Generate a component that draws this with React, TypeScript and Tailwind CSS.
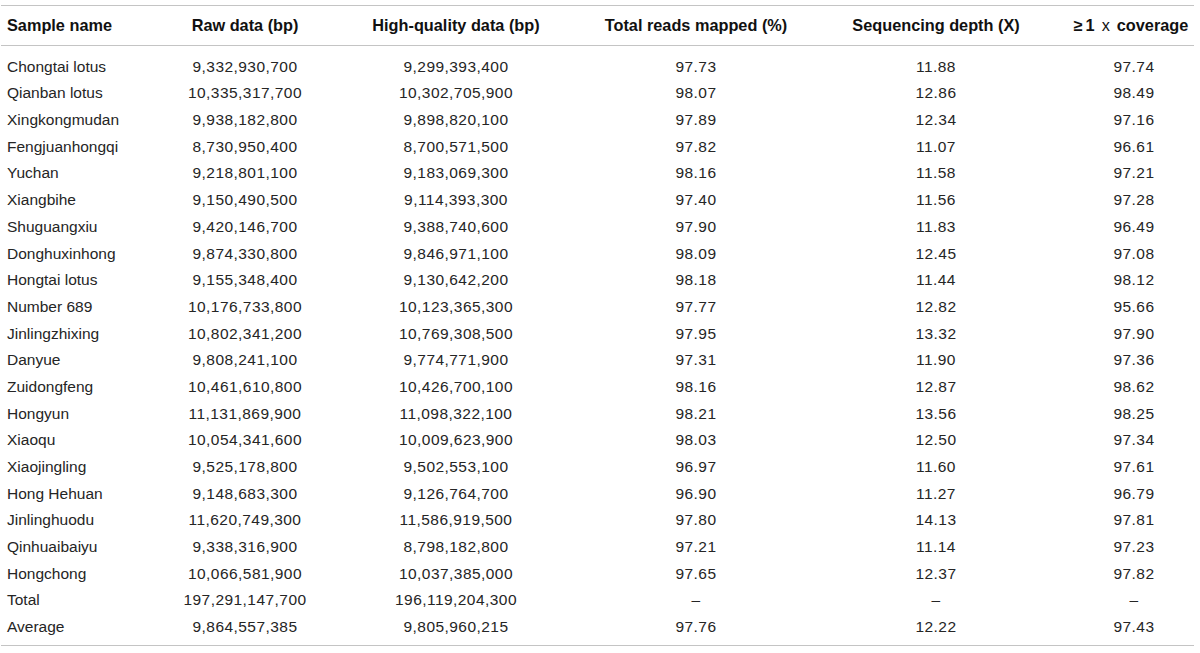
const ROWS: [string, string, string, string, string, string][] = [
  ["Chongtai lotus", "9,332,930,700", "9,299,393,400", "97.73", "11.88", "97.74"],
  ["Qianban lotus", "10,335,317,700", "10,302,705,900", "98.07", "12.86", "98.49"],
  ["Xingkongmudan", "9,938,182,800", "9,898,820,100", "97.89", "12.34", "97.16"],
  ["Fengjuanhongqi", "8,730,950,400", "8,700,571,500", "97.82", "11.07", "96.61"],
  ["Yuchan", "9,218,801,100", "9,183,069,300", "98.16", "11.58", "97.21"],
  ["Xiangbihe", "9,150,490,500", "9,114,393,300", "97.40", "11.56", "97.28"],
  ["Shuguangxiu", "9,420,146,700", "9,388,740,600", "97.90", "11.83", "96.49"],
  ["Donghuxinhong", "9,874,330,800", "9,846,971,100", "98.09", "12.45", "97.08"],
  ["Hongtai lotus", "9,155,348,400", "9,130,642,200", "98.18", "11.44", "98.12"],
  ["Number 689", "10,176,733,800", "10,123,365,300", "97.77", "12.82", "95.66"],
  ["Jinlingzhixing", "10,802,341,200", "10,769,308,500", "97.95", "13.32", "97.90"],
  ["Danyue", "9,808,241,100", "9,774,771,900", "97.31", "11.90", "97.36"],
  ["Zuidongfeng", "10,461,610,800", "10,426,700,100", "98.16", "12.87", "98.62"],
  ["Hongyun", "11,131,869,900", "11,098,322,100", "98.21", "13.56", "98.25"],
  ["Xiaoqu", "10,054,341,600", "10,009,623,900", "98.03", "12.50", "97.34"],
  ["Xiaojingling", "9,525,178,800", "9,502,553,100", "96.97", "11.60", "97.61"],
  ["Hong Hehuan", "9,148,683,300", "9,126,764,700", "96.90", "11.27", "96.79"],
  ["Jinlinghuodu", "11,620,749,300", "11,586,919,500", "97.80", "14.13", "97.81"],
  ["Qinhuaibaiyu", "9,338,316,900", "8,798,182,800", "97.21", "11.14", "97.23"],
  ["Hongchong", "10,066,581,900", "10,037,385,000", "97.65", "12.37", "97.82"],
  ["Total", "197,291,147,700", "196,119,204,300", "–", "–", "–"],
  ["Average", "9,864,557,385", "9,805,960,215", "97.76", "12.22", "97.43"],
];

// fixed column widths so each centred column lands where the original does
const COLS = "grid grid-cols-[170px_148px_274px_206px_274px_122px]";

export default function App() {
  return (
    <div className="bg-white w-[1200px] h-[653px] pt-[5px] pl-[1px] font-['Liberation_Sans',Arial,sans-serif] text-[#252525]">
      <div className="w-[1193px] border-t border-b border-[#c4c4c4]">
        <div className={`${COLS} h-[40px] items-center border-b border-[#c4c4c4] text-[16.3px] font-bold text-[#111]`}>
          <div className="pl-[6px]">Sample name</div>
          <div className="text-center">Raw data (bp)</div>
          <div className="text-center">High-quality data (bp)</div>
          <div className="text-center">Total reads mapped (%)</div>
          <div className="text-center">Sequencing depth (X)</div>
          <div className="text-center whitespace-nowrap pr-[6px]">
            ≥<span className="pl-[3px]">1</span>
            <span className="font-normal px-[7px]">x</span>coverage
          </div>
        </div>
        <div className="pt-[7px] pb-[5px] text-[15.5px]">
          {ROWS.map((r) => (
            <div key={r[0]} className={`${COLS} h-[26.7px] items-center`}>
              <div className="pl-[6px]">{r[0]}</div>
              {r.slice(1).map((v, i) => (
                <div key={i} className="text-center tracking-[0.45px]">
                  {v}
                </div>
              ))}
            </div>
          ))}
        </div>
      </div>
    </div>
  );
}
